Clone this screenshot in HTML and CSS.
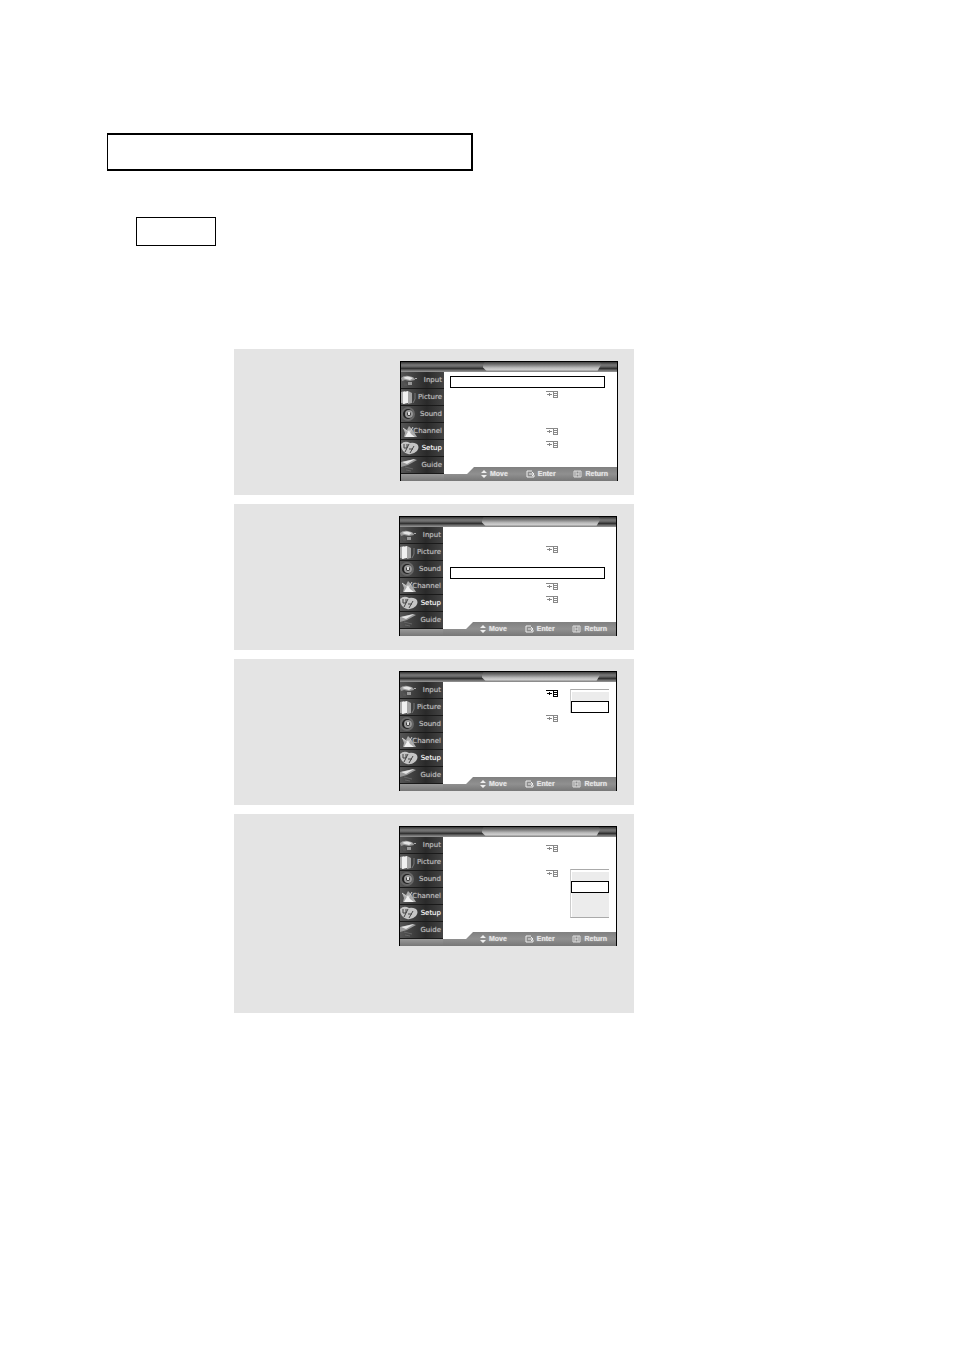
FILE: index.html
```
<!DOCTYPE html>
<html lang="en">
  <head>
    <meta charset="utf-8" />
    <title>TV Setup</title>
    <link rel="stylesheet" href="styles.css">
    <script src="screens.js" defer></script>
  </head>
  <body>
    <svg class="defs" width="0" height="0" aria-hidden="true">
      <symbol id="go" viewBox="0 0 12 7">
        <path d="M0 0h12v7H7V1H0z M1 3h2V2h1v1h2v1H4v1H3V4H1z" />
        <path d="M8 1h3v1H8z M8 3h3v1H8z M8 5h3v1H8z" fill="#fff" />
      </symbol>
      <symbol id="input" viewBox="0 0 16 16">
        <path d="M0 6Q3 3 8 4Q14 5 14 8L9 9L4 8L1 9z" fill="#999" />
        <path d="M2 6Q6 3 12 6L9 8L5 7z" fill="#e4e4e4" />
        <path d="M7 10h4v3H7z" fill="#999" />
        <path d="M2 10l4 2v2H3z" fill="#555" />
        <path d="M14 6h2v1h-2z" fill="#aaa" />
      </symbol>
      <symbol id="picture" viewBox="0 0 16 16">
        <path d="M0 3l4-1v13l-4-1z" fill="#aaa" />
        <path d="M2 3l5-1v12l-5 1z" fill="#f0f0f0" />
        <path d="M7 2l4 2v10l-4 1z" fill="#a4a4a4" />
        <path d="M14 4v6l-2 4" stroke="#777" fill="none" />
      </symbol>
      <symbol id="sound" viewBox="0 0 16 16">
        <circle cx="7" cy="8" r="6" fill="#222" stroke="#666" stroke-width="2" />
        <circle cx="8" cy="8" r="3" fill="#333" stroke="#999" stroke-width="2" />
        <path d="M8 6v3" stroke="#ddd" stroke-width="2" />
      </symbol>
      <symbol id="channel" viewBox="0 0 16 16">
        <path d="M2 5l4 2 2-4 3 3 5 8H3l1-4z" fill="#aaa" />
        <path d="M4 14l4-7 2 4 4 3z" fill="#f0f0f0" />
        <path d="M2 5l5 4M12 4l-3 5" stroke="#ccc" />
      </symbol>
      <symbol id="setup" viewBox="0 0 18 16">
        <path d="M0 4q4-4 9-1 3-1 7 1 3 3 0 7-4 4-9 3-7-2-7-10z" fill="#c4c4c4" />
        <path d="M3 4v4h3V4M8 4l-4 8M13 6l-4 7M8 9h4" stroke="#444" fill="none" />
      </symbol>
      <symbol id="guide" viewBox="0 0 16 16">
        <path d="M0 5l13-3 3 1-9 5-7 2z" fill="#999" />
        <path d="M1 5l13-3-8 5z" fill="#e4e4e4" />
        <path d="M4 10l8 2M5 13l5 1" stroke="#666" />
      </symbol>
      <symbol id="move" viewBox="0 0 6 8">
        <path d="M0 3l3-3 3 3z M0 5h6L3 8z" />
      </symbol>
      <symbol id="enter" viewBox="0 0 9 8">
        <path d="M6 1H1v6h7V5M3 4h5M6 2l2 2-2 2" fill="none" stroke="#eee" />
      </symbol>
      <symbol id="return" viewBox="0 0 9 8">
        <path d="M1 1h7v6H1z M3 1v6M6 1v6M3 4h3" fill="none" stroke="#ddd" />
      </symbol>
    </svg>

    <main class="page">
      <div class="title-box"></div>
      <div class="label-box"></div>
      <ol class="steps">
        <li class="step" data-icons="2,5,6" data-selected="1"></li>
        <li class="step" data-icons="2,5,6" data-selected="4"></li>
        <li class="step" data-icons="1,3" data-active="1" data-options="2"></li>
        <li class="step step-last" data-icons="1,3" data-active="3" data-options="4"></li>
      </ol>
    </main>
  </body>
</html>
```
FILE: styles.css
```
* {
  box-sizing: border-box;
}

body {
  margin: 0;
  background: #fff;
  font-family: "DejaVu Sans", sans-serif;
}

.defs {
  position: absolute;
}

.page {
  padding: 133px 107px 40px;
}

.title-box {
  max-width: 366px;
  height: 38px;
  border: 2px solid #000;
  border-left-width: 1px;
}

.label-box {
  width: 80px;
  height: 29px;
  margin: 46px 0 103px 29px;
  border: 1px solid #000;
}

.steps {
  display: grid;
  gap: 9px;
  max-width: 400px;
  margin: 0 0 0 127px;
  padding: 0;
  list-style: none;
}

.step {
  display: flex;
  justify-content: flex-end;
  align-items: flex-start;
  min-height: 146px;
  padding: 12px 17px 13px;
  background: #e4e4e4;
}

.step:first-child {
  padding-right: 16px;
}

.step-last {
  min-height: 199px;
}

.tv {
  display: grid;
  grid-template-columns: 43px 1fr;
  grid-template-rows: 10px 1fr;
  width: 218px;
  height: 120px;
  border: 1px solid #000;
  background: #fff;
}

.tv-top {
  grid-column: 1 / 3;
  display: flex;
  justify-content: center;
  padding-left: 66px;
  background: linear-gradient(#333, #777 30%, #666 45%, #333 65%, #666 80%, #999);
}

.tv-tab {
  width: 119px;
  height: 9px;
  background: linear-gradient(#444, #777 30%, #bbb 65%, #ccc 85%, #999);
  clip-path: polygon(2px 0, 117px 0, 119px 2px, 115px 100%, 4px 100%, 0 5px);
}

.side {
  display: flex;
  flex-direction: column;
}

.nav {
  flex: 1;
  display: grid;
  grid-auto-rows: 1fr;
}

.nav-item {
  display: flex;
  align-items: center;
  justify-content: space-between;
  padding-right: 2px;
  background: linear-gradient(90deg, #555, #2a2a2a 60%, #444);
  border-bottom: 1px solid #1a1a1a;
  color: #bbb;
  font-size: 7px;
  line-height: 8px;
  text-decoration: none;
  text-shadow: 0 0 1px #999;
}

.nav-item svg {
  width: 16px;
  height: 16px;
  margin-right: -4px;
}

.nav-item.current {
  color: #fff;
}

.nav-item.current svg {
  width: 18px;
}

.strip {
  height: 7px;
  background: linear-gradient(#999, #777);
}

.content {
  display: flex;
  flex-direction: column;
}

.menu {
  flex: 1;
  display: grid;
  grid-template-rows: 12px 13px 11px 12px 14px 13px;
  margin: 0;
  padding: 4px 11px 0 7px;
  list-style: none;
}

.step:first-child .menu {
  padding: 4px 12px 0 6px;
}

.menu.sub {
  grid-template-rows: 12px 13px 12px 12px 13px 12px;
  padding-top: 5px;
}

.row {
  position: relative;
  display: flex;
  align-items: center;
  padding-left: 96px;
  color: #888;
}

.row.selected {
  border: 1px solid #000;
}

.row.active {
  color: #000;
}

.go {
  width: 12px;
  height: 7px;
  fill: currentColor;
}

.options {
  position: absolute;
  top: 2px;
  left: 120px;
  width: 39px;
  padding: 2px 0 0;
  border-top: 1px solid #aaa;
  border-left: 1px solid #ccc;
  list-style: none;
}

.options.long {
  border-bottom: 1px solid #aaa;
}

.option {
  height: 12px;
  margin-left: 1px;
  background: #ececec;
}

.option:first-child {
  height: 9px;
}

.option.selected {
  margin-left: 0;
  border: 1px solid #000;
  background: #fff;
}

.keys {
  display: flex;
  align-items: center;
  justify-content: space-between;
  height: 14px;
  padding: 0 9px 0 37px;
  background: linear-gradient(#808080, #909090 50%, #777);
  clip-path: polygon(0 7px, 23px 7px, 30px 0, 100% 0, 100% 100%, 0 100%);
  color: #e4e4e4;
  font: bold 7px/8px "Liberation Sans", sans-serif;
  text-shadow: 0 0 1px #ccc;
}

.key {
  display: flex;
  align-items: center;
  gap: 3px;
}

.key svg {
  width: 9px;
  height: 8px;
  fill: #eee;
}

.key:first-child svg {
  width: 6px;
}
```
FILE: screens.js
```
const navItems = ["Input", "Picture", "Sound", "Channel", "Setup", "Guide"];
const keys = ["Move", "Enter", "Return"];

function icon(name, cls) {
  return `<svg class="${cls || ""}" aria-hidden="true"><use href="#${name}"></use></svg>`;
}

function optionList(count) {
  let html = `<ul class="options ${count > 2 ? "long" : ""}">`;
  for (let i = 1; i <= count; i++) {
    html += `<li class="option ${i === 2 ? "selected" : ""}"></li>`;
  }
  return html + "</ul>";
}

document.querySelectorAll(".step").forEach((step) => {
  const icons = step.dataset.icons.split(",").map(Number);
  const selected = Number(step.dataset.selected);
  const active = Number(step.dataset.active);
  const options = Number(step.dataset.options);

  let rows = "";
  for (let i = 1; i <= 6; i++) {
    // only the short list darkens the arrow of its row
    const state = i === selected ? "selected" : i === active && options === 2 ? "active" : "";
    rows += `<li class="row ${state}">${icons.includes(i) ? icon("go", "go") : ""}${
      i === active ? optionList(options) : ""
    }</li>`;
  }

  const nav = navItems
    .map((n) => `<a class="nav-item ${n === "Setup" ? "current" : ""}" href="#">${icon(n.toLowerCase())}<span>${n}</span></a>`)
    .join("");
  const help = keys.map((k) => `<span class="key">${icon(k.toLowerCase())}${k}</span>`).join("");

  step.innerHTML = `
    <div class="tv">
      <div class="tv-top"><div class="tv-tab"></div></div>
      <div class="side"><nav class="nav">${nav}</nav><div class="strip"></div></div>
      <div class="content">
        <ul class="menu ${active ? "sub" : ""}">${rows}</ul>
        <div class="keys">${help}</div>
      </div>
    </div>`;
});
```
